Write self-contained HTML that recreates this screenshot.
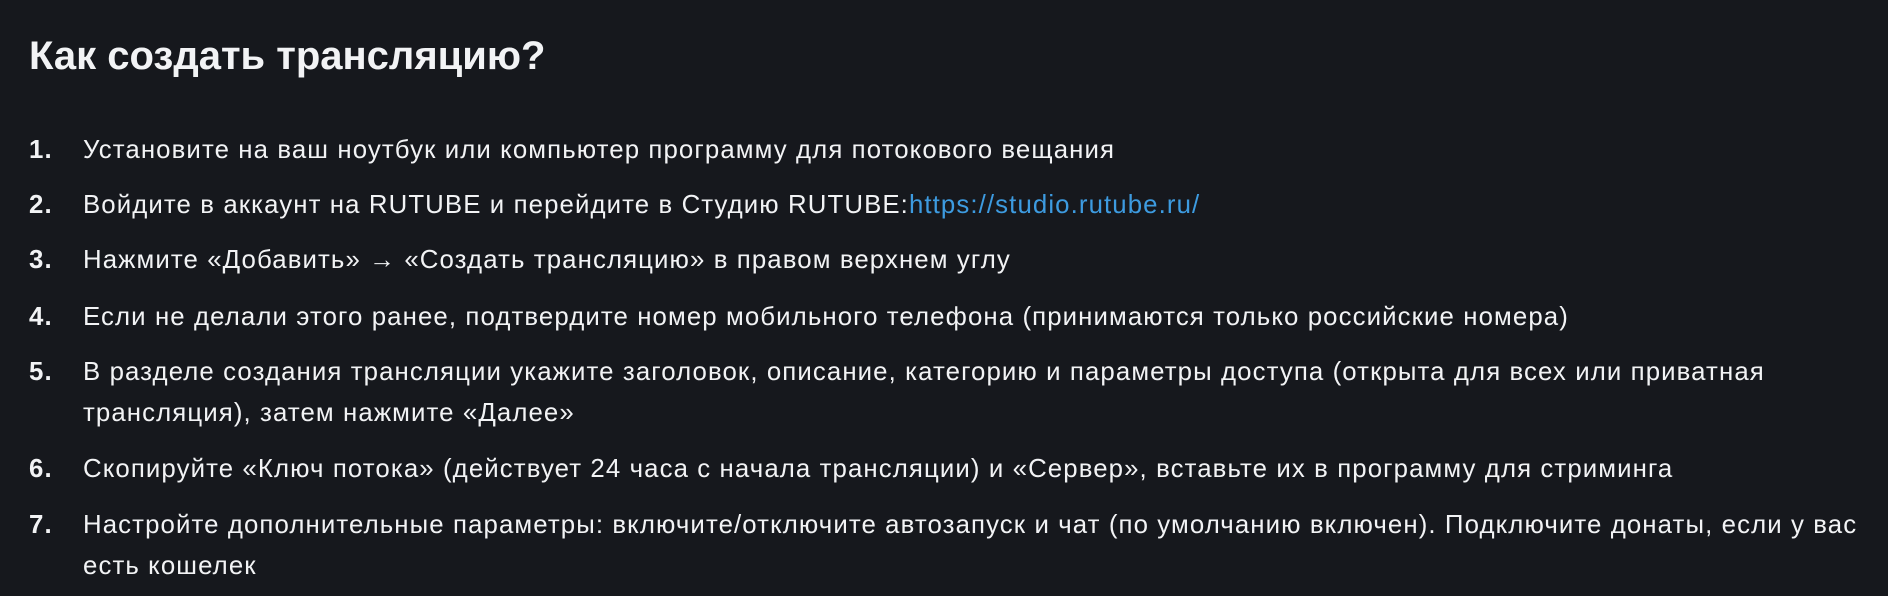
<!DOCTYPE html>
<html><head><meta charset="utf-8"><style>
html,body{margin:0;padding:0;background:#16181d;width:1888px;height:596px;overflow:hidden}
body{font-family:"Liberation Sans","DejaVu Sans",sans-serif;color:#f2f3f5}
h1{position:absolute;left:29px;top:31px;margin:0;font-size:40px;font-weight:600;line-height:50px;letter-spacing:0px}
.item{position:absolute;left:0;font-size:25.8px;line-height:41px;letter-spacing:1.1px;white-space:nowrap}
.n{position:absolute;left:29px;font-weight:bold}
.t{position:absolute;left:83px}
a{color:#3d9be0;text-decoration:none}
</style></head><body>
<h1>Как создать трансляцию?</h1>
<div class="item" style="top:130px"><span class="n">1.</span><span class="t">Установите на ваш ноутбук или компьютер программу для потокового вещания</span></div>
<div class="item" style="top:185px"><span class="n">2.</span><span class="t">Войдите в аккаунт на RUTUBE и перейдите в Студию RUTUBE:<a>https://studio.rutube.ru/</a></span></div>
<div class="item" style="top:240px"><span class="n">3.</span><span class="t">Нажмите «Добавить» → «Создать трансляцию» в правом верхнем углу</span></div>
<div class="item" style="top:297px"><span class="n">4.</span><span class="t">Если не делали этого ранее, подтвердите номер мобильного телефона (принимаются только российские номера)</span></div>
<div class="item" style="top:352px"><span class="n">5.</span><span class="t">В разделе создания трансляции укажите заголовок, описание, категорию и параметры доступа (открыта для всех или приватная<br>трансляция), затем нажмите «Далее»</span></div>
<div class="item" style="top:449px"><span class="n">6.</span><span class="t">Скопируйте «Ключ потока» (действует 24 часа с начала трансляции) и «Сервер», вставьте их в программу для стриминга</span></div>
<div class="item" style="top:505px"><span class="n">7.</span><span class="t">Настройте дополнительные параметры: включите/отключите автозапуск и чат (по умолчанию включен). Подключите донаты, если у вас<br>есть кошелек</span></div>
</body></html>
